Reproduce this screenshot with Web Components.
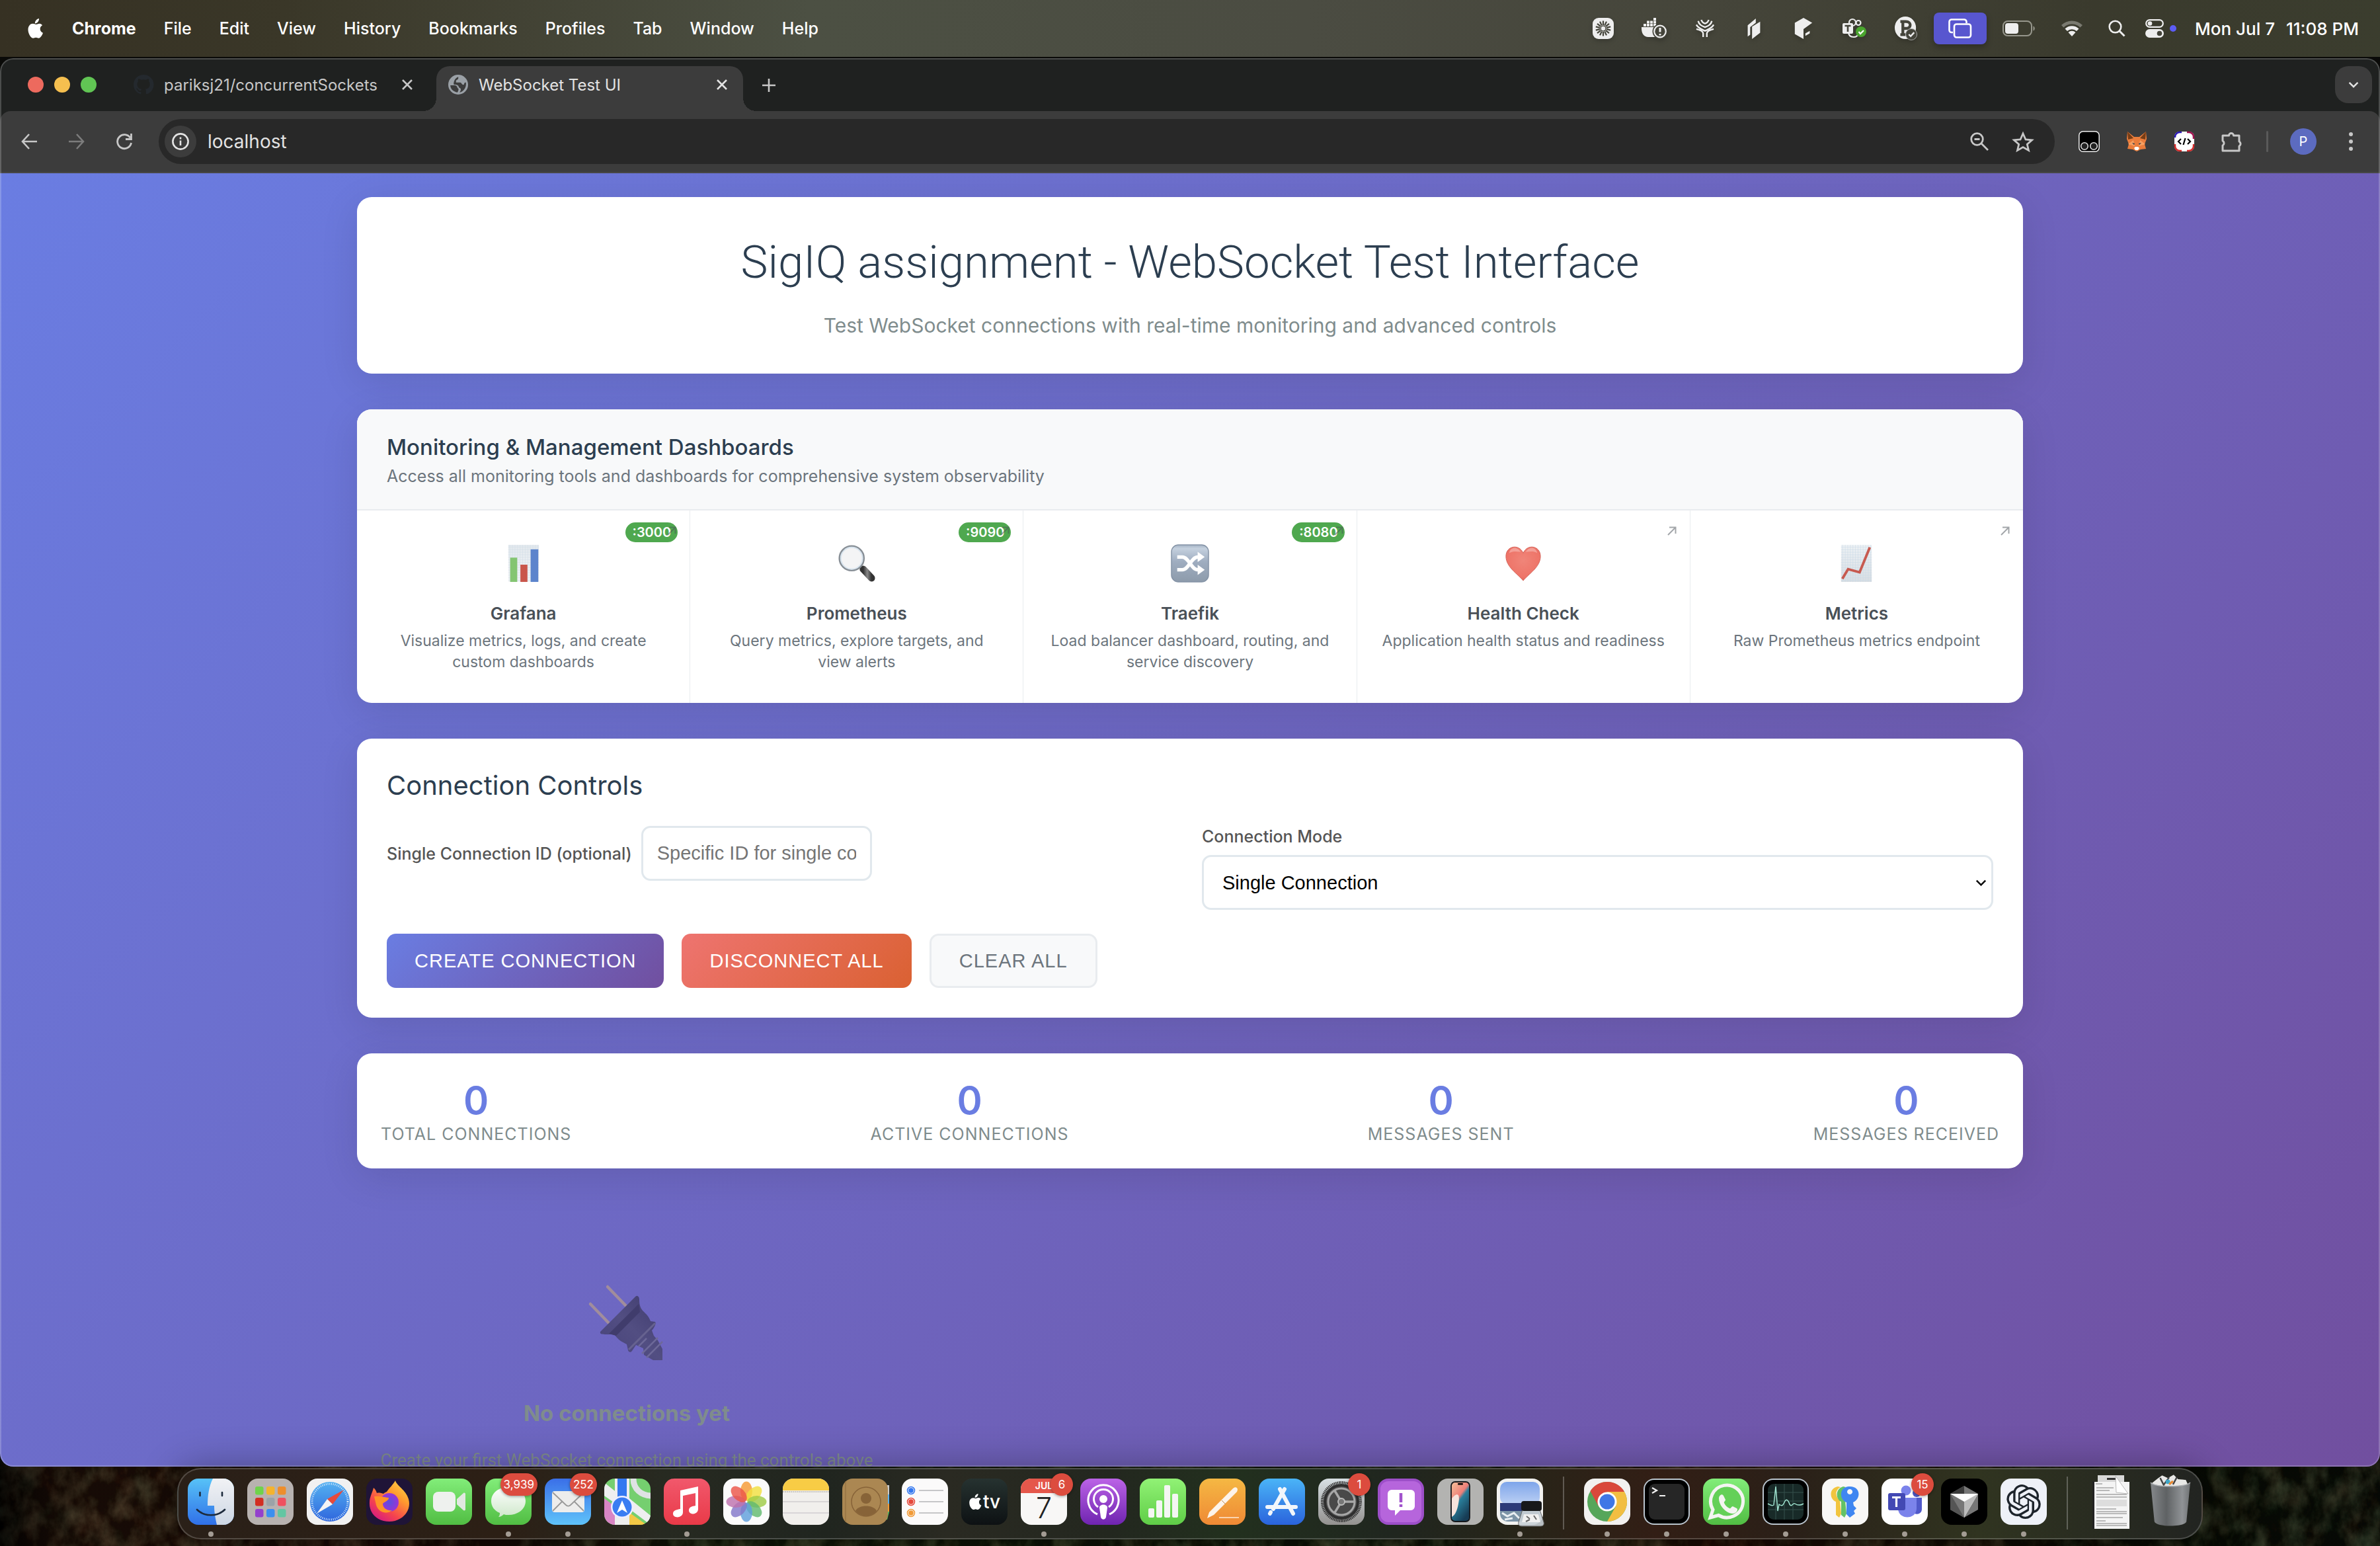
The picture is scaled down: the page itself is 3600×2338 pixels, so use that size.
<!DOCTYPE html>
<html lang="en">
<head>
<meta charset="utf-8">
<title>WebSocket Test UI</title>
<style>
html,body{margin:0;height:100%}
body{font-family:Inter,"Liberation Sans",sans-serif;overflow:hidden;background:#000}
</style>
</head>
<body>
<mac-desktop></mac-desktop>
<script>
/* ---------- icon library ---------- */
const petals=(n,r,f)=>Array.from({length:n},(_,i)=>f(i*360/n,i)).join('');
const ICONS={
apple:['0 0 26 32','<path fill="#fff" d="M18 1c.2 2-.6 3.900-1.800 5.300C15 7.700 13.400 8.500 11.900 8.400 11.700 6.500 12.600 4.700 13.700 3.400 14.900 2 16.700 1.100 18 1zM23 11.300c-2.500 1.500-3.300 3.400-3.300 5.500 0 2.700 1.500 4.900 4.300 6-1.100 3.400-3.900 8-6.500 8-1.600 0-2.300-1-4.200-1s-2.700 1-4.100 1C6 30.800 1.500 24.500 1.500 17.800c0-5.600 3.500-9 7.200-9 2 0 3.600 1.200 4.800 1.200 1.200 0 3-1.300 5.300-1.300 1.700 0 3.300.9 4.200 2.600z"/>'],
claude:['0 0 32 32','<rect width="32" height="32" rx="9" fill="#eee"/>'+petals(14,0,a=>`<path d="M16 11V4.500" stroke="#44443a" stroke-width="2.200" transform="rotate(${a} 16 16)"/>`)+'<circle cx="16" cy="16" r="4.600" fill="#44443a"/><circle cx="16" cy="16" r="3.200" fill="#eee"/>'],
docker:['0 0 38 32','<path fill="#eee" d="M0 14h19v10a8 8 0 0 0 2 5H10C4 29 0 24 0 16z"/><path fill="#eee" d="M3 9h4v4H3zM8 9h4v4H8zM13 9h4v4h-4zM8 4.500h4v4H8zM13 4.500h4v4h-4zM18 9h4v4h-4zM18 0h4v4h-4zM18 4.500h4v4h-4z"/><circle cx="28" cy="20.500" r="11.500" fill="#44443a"/><circle cx="28" cy="20.500" r="8.800" fill="none" stroke="#eee" stroke-width="2.200"/><path d="M28 15v6.500M28 24v2.500" stroke="#eee" stroke-width="3"/>'],
tree:['0 0 28 30','<g fill="none" stroke="#eee" stroke-width="2.600"><path d="M8 1c1 4 3 5 6 6 3-1 5-2 6-6M3 3c1 6 6 8 11 10 5-2 10-4 11-10M0 9c3 6 8 7 14 10 6-3 11-4 14-10M0 16c4 1 11 3 11 7v6M28 16c-4 1-11 3-11 7v6"/></g>'],
leaf:['0 0 20 34','<path fill="#eee" d="M0 12 13 1v7L4 15v12l-4 3zM20 6v18L7 34V14z"/>'],
cube:['0 0 28 34','<path fill="#eee" d="M14 0 28 8 14 18V34L0 26V8zM17 25l7-4v4l-7 4z"/>'],
teamsbar:['0 0 36 30','<g fill="none" stroke="#eee" stroke-width="2.200"><circle cx="15" cy="6" r="5"/><circle cx="24" cy="6.500" r="3.500"/><path d="M9 20c0 5 3 8 8 8 4 0 6-2 7-5"/></g><rect y="7" width="16" height="16" rx="2" fill="#eee"/><path d="M3.500 11h9M8 11v9" stroke="#44443a" stroke-width="2.600"/><circle cx="28" cy="20" r="8" fill="#4aa52e"/><path d="m24.500 20 2.500 3 5-5" fill="none" stroke="#fff" stroke-width="2.200"/>'],
pcheck:['0 0 36 38','<ellipse cx="17" cy="18" rx="17" ry="18" fill="#eee"/><path d="M9 8h9c9 0 9 11 0 11h-4M13 8v21M9 29h8" fill="none" stroke="#44443a" stroke-width="4.500"/><circle cx="26.500" cy="28.500" r="9" fill="#44443a" stroke="#aaa" stroke-width="1"/><path d="m22.500 28.500 3 3 5.500-6" fill="none" stroke="#eee" stroke-width="2.600"/>'],
windows:['0 0 36 30','<g fill="none" stroke="#fff" stroke-width="2.600"><path d="M7 21H5a3.500 3.500 0 0 1-3.500-3.500V5A3.500 3.500 0 0 1 5 1.500h19A3.500 3.500 0 0 1 27.500 5v2"/><rect x="9" y="8.500" width="25" height="20" rx="3.500"/></g>'],
battery:['0 0 50 24','<rect x="1" y="1" width="43" height="22" rx="7" fill="none" stroke="#96968c" stroke-width="2"/><rect x="4" y="4" width="20" height="16" rx="4" fill="#eee"/><path d="M46.500 8.500c3 1 3 6 0 7z" fill="#96968c"/>'],
wifi:['0 0 34 26','<path d="M1 8a23 23 0 0 1 32 0l-3.500 3.500a18 18 0 0 0-25 0z" fill="#7a7a70"/><path d="M6.500 13.500a15 15 0 0 1 21 0L24 17a10 10 0 0 0-14 0zM11.500 19a8 8 0 0 1 11 0L17 25z" fill="#eee"/>'],
searchm:['0 0 26 26','<circle cx="10.500" cy="10.500" r="8.800" fill="none" stroke="#eee" stroke-width="2.600"/><path d="m17 17 7.500 7.500" stroke="#eee" stroke-width="3"/>'],
control:['0 0 28 28','<rect x="1.200" y="1.200" width="25.600" height="10.600" rx="5.300" fill="none" stroke="#eee" stroke-width="2.200"/><circle cx="7" cy="6.500" r="3.300" fill="#eee"/><rect y="15" width="28" height="13" rx="6.500" fill="#eee"/><circle cx="21.500" cy="21.500" r="3.800" fill="#44443a"/>'],
github:['0 0 32 32','<path fill="#24292e" d="M16 0a16 16 0 0 0-5 31.200c.8.1 1.100-.3 1.100-.8v-3c-4.500 1-5.400-1.900-5.400-1.900-.7-1.800-1.800-2.300-1.800-2.300-1.400-1 .1-1 .1-1 1.600.1 2.500 1.700 2.500 1.700 1.400 2.500 3.800 1.700 4.700 1.300.1-1 .6-1.700 1-2.100-3.600-.4-7.300-1.800-7.300-7.900 0-1.700.6-3.200 1.600-4.300-.1-.4-.7-2 .2-4.200 0 0 1.300-.4 4.400 1.600a15 15 0 0 1 8 0c3-2 4.400-1.600 4.400-1.600.9 2.200.3 3.800.2 4.200 1 1.100 1.600 2.600 1.600 4.300 0 6.100-3.800 7.500-7.300 7.900.6.500 1.100 1.500 1.100 3v4.400c0 .4.300.9 1.100.8A16 16 0 0 0 16 0z"/>'],
globe:['0 0 28 28','<circle cx="14" cy="14" r="14" fill="#9aa0a6"/><path fill="#3c3c3c" d="M3 15h7c2 1 3 2 3 4 2 0 2 3 0 6-6-1-10-5-10-10zM14 3c1 3-1 4-3 5v3h6c2 0 2 4 5 3 1-1 0-3 3-3 1 8-4 13-9 14 3-4 2-6-1-7 0-3-3-4-5-4H8c-1-3 1-9 6-11z"/>'],
x:['0 0 20 20','<path d="m3 3 14 14M17 3 3 17" stroke="currentColor" stroke-width="2.600"/>'],
plus:['0 0 20 20','<path d="M10 0v20M0 10h20" stroke="currentColor" stroke-width="2.600"/>'],
chev:['0 0 20 12','<path d="m2 2 8 8 8-8" fill="none" stroke="currentColor" stroke-width="3"/>'],
go:['0 0 14 14','<path d="M1 13 12 2M3 1.500h9.500V11" fill="none" stroke="#495057" stroke-width="2"/>'],
back:['0 0 24 24','<path d="M24 12H2M12 1 2 12l10 11" fill="none" stroke="currentColor" stroke-width="2.600"/>'],
fwd:['0 0 24 24','<path d="M0 12h22M12 1l10 11-10 11" fill="none" stroke="currentColor" stroke-width="2.600"/>'],
reload:['0 0 24 24','<path d="M21 6.500A10.500 10.500 0 1 0 22.500 14M22.500 0v8.500H14" fill="none" stroke="currentColor" stroke-width="2.800"/>'],
info:['0 0 26 26','<circle cx="13" cy="13" r="11.600" fill="none" stroke="#e3e3e3" stroke-width="2.600"/><path d="M13 11.500V19M13 6.500v3" stroke="#e3e3e3" stroke-width="2.600"/>'],
zoomout:['0 0 28 28','<g fill="none" stroke="#c7c7c7"><circle cx="10.500" cy="10.500" r="8.800" stroke-width="2.800"/><path d="m17 17 10 10M6.500 10.500h8" stroke-width="2.800"/></g>'],
star:['0 0 32 30','<path d="m16 3 4 9 9.500.8-7.200 6.400 2.200 9.300L16 23.500l-8.500 5 2.200-9.300L2.500 12.800 12 12z" fill="none" stroke="#c7c7c7" stroke-width="2.800"/>'],
ext1:['0 0 32 32','<rect x=".8" y=".8" width="30.400" height="30.400" rx="6" fill="#000" stroke="#eee" stroke-width="1.500"/><circle cx="9" cy="23" r="5.300" fill="#222" stroke="#ddd" stroke-width="1.600"/><circle cx="23" cy="23" r="5.300" fill="#222" stroke="#ddd" stroke-width="1.600"/>'],
fox:['0 0 32 32','<path fill="#ea7d3c" d="M2 1 12 9h8L30 1l1 11-3 8 2 7-8 1-6 3-6-3-8-1 2-7-3-8z"/><path fill="#763d16" d="m2 1 9 10-8 2zM30 1l-9 10 8 2z"/><path fill="#f6a063" d="m3 20 8-6 2 9zM29 20l-8-6-2 9z"/><path fill="#fff" d="m12 26 2-2h4l2 2-2 3h-4z"/><path fill="#233447" d="m9 18 4 1-1 2zM23 18l-4 1 1 2z"/>'],
ext3:['0 0 32 32','<rect x="1" y="1" width="30" height="30" rx="8" fill="#fff"/><path d="M2 10V9a7 7 0 0 1 7-7h3" fill="none" stroke="#2b1ab5" stroke-width="2.500"/><path d="M20 2h3a7 7 0 0 1 7 7v3" fill="none" stroke="#a0104e" stroke-width="2.500"/><path d="M2 20v3a7 7 0 0 0 7 7h3M30 20v3a7 7 0 0 1-7 7h-3" fill="none" stroke="#d42a2a" stroke-width="2.500"/><path d="m11 12-4 4 4 4M21 12l4 4-4 4M17.500 11l-3 10" fill="none" stroke="#000" stroke-width="2.200"/>'],
puzzle:['0 0 32 32','<path d="M2 7h9.500a3.500 3.500 0 1 1 7 0H27v9a4 4 0 0 1 0 7v7H2v-8a4 4 0 0 0 0-7z" fill="none" stroke="#c7c7c7" stroke-width="3" stroke-linejoin="round"/>'],
more:['0 0 8 30','<g fill="#c7c7c7"><circle cx="4" cy="4" r="3"/><circle cx="4" cy="15" r="3"/><circle cx="4" cy="26" r="3"/></g>'],
/* emoji */
bars:['0 0 60 60','<defs><linearGradient id="g" x2="0" y2="1"><stop stop-color="#e3e9ee"/><stop offset="1" stop-color="#f3f5f7"/></linearGradient><pattern id="p" width="4" height="4" patternUnits="userSpaceOnUse"><path d="M0 0h4M0 0v4" stroke="#cfdbe6" stroke-width="1"/></pattern></defs><rect x="6" y="1" width="48" height="58" fill="url(#g)"/><rect x="6" y="1" width="48" height="58" fill="url(#p)"/><path fill="#84c572" d="M9 21h11v38H9z"/><path fill="#c9564b" d="M25 32h11v27H25z"/><path fill="#5c84cc" d="M41 8h12v51H41z"/>'],
lens:['0 0 60 60','<defs><linearGradient id="g" x2="1"><stop stop-color="#333"/><stop offset=".5" stop-color="#888"/><stop offset="1" stop-color="#333"/></linearGradient></defs><path d="m36 36 6 6" stroke="#999" stroke-width="4"/><path d="M40 39 53 53" stroke="url(#g)" stroke-width="11" stroke-linecap="round"/><circle cx="22" cy="22" r="19" fill="#f4f4f5" stroke="#888f96" stroke-width="3"/><circle cx="22" cy="22" r="17" fill="none" stroke="#d8e4ee" stroke-width="2"/>'],
shuffle:['0 0 60 60','<defs><linearGradient id="g" x2="0" y2="1"><stop stop-color="#a4b2c3"/><stop offset=".1" stop-color="#c4d0de"/><stop offset=".45" stop-color="#9fadc0"/><stop offset="1" stop-color="#8d9bab"/></linearGradient></defs><rect x="1" y="1" width="58" height="58" rx="11" fill="url(#g)" stroke="#8493a6" stroke-width="1.500"/><path d="M10 20h8c10 0 14 20 24 20h5M10 40h8c10 0 14-20 24-20h5" fill="none" stroke="#fff" stroke-width="5.500"/><path fill="#fff" d="m42 12 11 8-11 8zM42 32l11 8-11 8z"/>'],
heart:['0 0 60 60','<defs><radialGradient id="g" cx=".5" cy=".4" r=".7"><stop stop-color="#f08579"/><stop offset=".7" stop-color="#ee7468"/><stop offset="1" stop-color="#d65c50"/></radialGradient></defs><path fill="url(#g)" stroke="#d4665b" d="M30 57C22 47 3 36 3 19 3 2 24-1 30 14 36-1 57 2 57 19c0 17-19 28-27 38z"/><path fill="#fff" opacity=".3" d="M8 14C10 3 22 4 26 12 20 12 14 10 8 14zM34 12c4-8 16-9 18 2-6-4-12-2-18-2z"/>'],
chart:['0 0 60 60','<defs><pattern id="p" width="4" height="4" patternUnits="userSpaceOnUse"><path d="M0 0h4M0 0v4" stroke="#c6d8e6"/></pattern><linearGradient id="g" x2="0" y2="1"><stop stop-color="#eef2f5"/><stop offset="1" stop-color="#d9dee3"/></linearGradient></defs><rect x="6" y="1" width="48" height="58" fill="url(#g)"/><rect x="6" y="1" width="48" height="58" fill="url(#p)"/><path d="M8 54 17 39l18 5L51 5" fill="none" stroke="#c75a50" stroke-width="4"/>'],
plug:['0 0 114 114','<defs><linearGradient id="g" x1="0" y1="1" x2="1" y2="0"><stop stop-color="#47427a"/><stop offset=".5" stop-color="#524e82"/><stop offset="1" stop-color="#3f3b6d"/></linearGradient></defs><path d="M28 2 56 31M2 28 30 57" stroke="#a18d9c" stroke-width="4.500" stroke-linecap="round"/><path fill="url(#g)" d="M17 70 70 17c3-3 6 0 6 4 0 7 1 12 5 17 6 6 9 8 12 16l7 1c2 3-2 10-5 13l3 8 6 7 7 13v17h-14L83 105l-1-10-11-5-6 9c-2 3-5 2-6-1l-2-9c-8-4-13-7-18-14-4-2-8-1-13-1-6 0-10 0-9-4z"/><path fill="#403c6c" d="M30 73 75 28l2 12-36 36z"/><path d="M60 97 100 57" stroke="#66628f" stroke-width="3"/><path d="m80 103 24-24M87 109l24-24M75 92l12-12" stroke="#6d6999" stroke-width="2.500"/>'],
/* dock */
finder:['0 0 70 70','<defs><linearGradient id="g" x2="0" y2="1"><stop stop-color="#57c2f7"/><stop offset="1" stop-color="#3070e8"/></linearGradient><linearGradient id="h" x2="0" y2="1"><stop stop-color="#f1f2f5"/><stop offset="1" stop-color="#cdd7e4"/></linearGradient></defs><rect width="70" height="70" rx="16" fill="url(#g)"/><path fill="url(#h)" d="M38 0h16a16 16 0 0 1 16 16v38a16 16 0 0 1-16 16H44c-2-9-4-18-4-29H30C30 26 32 12 38 0z"/><path d="M18.500 21v5M52 21v5M14 47c11 11 31 11 42 0" fill="none" stroke="#1d2b3c" stroke-width="2.600" stroke-linecap="round"/>'],
launch:['0 0 70 70','<rect width="70" height="70" rx="16" fill="#b8b2b0"/>'+['#6fd34b','#f4b32e','#ee8e2c','#d22e22','#9ba3a8','#f0505f','#9440cc','#3b8ff0','#63c6a2'].map((c,i)=>`<rect x="${12+i%3*17}" y="${12+Math.floor(i/3)*17}" width="12.500" height="12.500" rx="3" fill="${c}"/>`).join('')],
safari:['0 0 70 70','<defs><linearGradient id="g" x2="0" y2="1"><stop stop-color="#54b1f1"/><stop offset="1" stop-color="#2f66dd"/></linearGradient></defs><rect width="70" height="70" rx="16" fill="#f1f1f1"/><circle cx="35" cy="35" r="30" fill="url(#g)"/><circle cx="35" cy="35" r="27" fill="none" stroke="#d6e8fa" stroke-width="3" stroke-dasharray="1 1.800"/><path fill="#e8493b" d="m56 17-25 14 8 8z"/><path fill="#f4f4f4" d="M15 53 39 39l-8-8z"/>'],
firefox:['0 0 70 70','<defs><linearGradient id="g" x1="1" y1="0" x2=".3" y2="1"><stop stop-color="#ffe14a"/><stop offset=".4" stop-color="#ff9a2e"/><stop offset=".75" stop-color="#f5444e"/><stop offset="1" stop-color="#d81e7c"/></linearGradient><radialGradient id="h"><stop stop-color="#5a4fe0"/><stop offset="1" stop-color="#9a34d4"/></radialGradient></defs><rect width="70" height="70" rx="16" fill="#1f1437"/><path fill="url(#g)" d="M44 3c2 8 16 14 20 28 5 18-10 34-29 34C17 65 4 53 5 36c0-8 4-14 6-22 3 2 4 5 5 8 3-1 7 0 10 1 2-2 3-2 5-3 4-6 9-10 13-17z"/><circle cx="35" cy="36" r="14" fill="url(#h)"/><path fill="#ff9327" d="M12 27c8-1 13 1 22 2 0 5-7 6-9 9 0 7 7 11 14 10-8 7-21 3-24-8z"/>'],
facetime:['0 0 70 70','<defs><linearGradient id="g" x2="0" y2="1"><stop stop-color="#82ed79"/><stop offset="1" stop-color="#51bd43"/></linearGradient></defs><rect width="70" height="70" rx="16" fill="url(#g)"/><rect x="11" y="20" width="34" height="30" rx="8" fill="#eef1ee"/><path fill="#e2e8e2" d="M47 31 57 22c1-1 3 0 3 1v24c0 1-2 2-3 1l-10-9z"/>'],
messages:['0 0 70 70','<defs><linearGradient id="g" x2="0" y2="1"><stop stop-color="#82ed79"/><stop offset="1" stop-color="#51bd43"/></linearGradient><linearGradient id="h" x2="0" y2="1"><stop stop-color="#fff"/><stop offset="1" stop-color="#cfe8cb"/></linearGradient></defs><rect width="70" height="70" rx="16" fill="url(#g)"/><path fill="url(#h)" d="M35 13c15 0 26 9 26 21S50 55 35 55c-3 0-5 0-7-1-2 2-5 4-8 4 2-2 2-4 2-6C14 49 9 42 9 34c0-12 11-21 26-21z"/>'],
mail:['0 0 70 70','<defs><linearGradient id="g" x2="0" y2="1"><stop stop-color="#3a6fe8"/><stop offset="1" stop-color="#5fc3fa"/></linearGradient></defs><rect width="70" height="70" rx="16" fill="url(#g)"/><rect x="11" y="19" width="49" height="32" rx="4" fill="#ededec"/><path d="m12 21 20 19c2 2 5 2 7 0l20-19M12 49l15-15M59 49 44 34" fill="none" stroke="#999" stroke-width="1.800"/>'],
maps:['0 0 70 70','<defs><clipPath id="c"><rect width="70" height="70" rx="16"/></clipPath></defs><g clip-path="url(#c)"><path fill="#75cf6f" d="M0 0h70v70H0z"/><path fill="#d885c4" d="M0 30 24 48v22H0z"/><path fill="#f3c846" d="M36 70V50l28 20z"/><path fill="#eeeef0" d="M0 6 20 22v18L0 26zM38 30 70 56v14L38 46z"/><path fill="#eee" d="M16 0h22v70H16z"/><path fill="#3478f0" d="M20 0h14v40H20z"/><path d="M44 0c0 16 12 26 28 26" fill="none" stroke="#dfe2e4" stroke-width="9"/></g><circle cx="27" cy="43" r="17" fill="#eef"/><circle cx="27" cy="43" r="14.500" fill="#3a7df2"/><path fill="#fff" d="m27 33 8 19-8-5-8 5z"/>'],
music:['0 0 70 70','<defs><linearGradient id="g" x2="0" y2="1"><stop stop-color="#f1586c"/><stop offset="1" stop-color="#e93a48"/></linearGradient></defs><rect width="70" height="70" rx="16" fill="url(#g)"/><path fill="#fff" d="M25 18 52 12v34c0 9-14 10-14 2 0-5 5-6 10-7V22l-19 4v25c0 9-15 10-15 2 0-5 6-6 11-7z"/>'],
photos:['0 0 70 70','<rect width="70" height="70" rx="16" fill="#fbfbfb"/>'+petals(8,0,(a,i)=>`<ellipse cx="35" cy="19" rx="9" ry="14.500" opacity=".82" fill="${['#f59a33','#f0df3f','#9fcb47','#62b96f','#5f9fdc','#8277c9','#bd71ad','#ec5648'][i]}" transform="rotate(${a} 35 35)"/>`)],
notes:['0 0 70 70','<rect width="70" height="70" rx="16" fill="#f1efec"/><path fill="#f8cc45" d="M0 18v-2A16 16 0 0 1 16 0h38a16 16 0 0 1 16 16v2z"/><path d="M0 20h70" stroke="#b9b5ac" stroke-width="2" stroke-dasharray="1.500 1.500"/><path d="M0 35h70M0 52h70" stroke="#cfcdd0" stroke-width="1.500"/>'],
contacts:['0 0 72 70','<path fill="#ccc" d="M64 10h7v14h-7z"/><path fill="#5ab1ef" d="M64 24h7v14h-7z"/><path fill="#f19a37" d="M64 38h7v12h-7z"/><path fill="#5fc965" d="M64 50h7l-3 12h-4z"/><rect width="69" height="70" rx="16" fill="#ab8752"/><path d="M5 4v62" stroke="#8c6b3c"/><circle cx="36" cy="35" r="22" fill="none" stroke="#876338" stroke-width="1.500"/><circle cx="36" cy="30" r="8" fill="#876338"/><path fill="#876338" d="M20 49c4-10 28-10 32 0-8 10-24 10-32 0z"/>'],
reminders:['0 0 70 70','<rect width="70" height="70" rx="16" fill="#fbfafa"/><g fill="none" stroke-width="1.500"><circle cx="14" cy="18" r="5.500" stroke="#3478f0"/><circle cx="14" cy="35" r="5.500" stroke="#e5483b"/><circle cx="14" cy="52" r="5.500" stroke="#f19a37"/><path d="M26 18h37M26 35h37M26 52h37" stroke="#b5b5b8"/></g><circle cx="14" cy="18" r="3.800" fill="#3478f0"/><circle cx="14" cy="35" r="3.800" fill="#e5483b"/><circle cx="14" cy="52" r="3.800" fill="#f19a37"/>'],
podcasts:['0 0 70 70','<defs><linearGradient id="g" x2="0" y2="1"><stop stop-color="#bb63e6"/><stop offset="1" stop-color="#6f24b0"/></linearGradient></defs><rect width="70" height="70" rx="16" fill="url(#g)"/><g fill="none" stroke="#fff" stroke-width="3"><path d="M26 54a23 23 0 1 1 18 0"/><path d="M27 43a14.500 14.500 0 1 1 16 0"/></g><circle cx="35" cy="31" r="6" fill="#fff"/><path fill="#fff" d="M29 44c0-6 12-6 12 0l-2 14c-1 5-7 5-8 0z"/>'],
numbers:['0 0 70 70','<defs><linearGradient id="g" x2="0" y2="1"><stop stop-color="#91f275"/><stop offset="1" stop-color="#5fcd47"/></linearGradient></defs><rect width="70" height="70" rx="16" fill="url(#g)"/><g fill="#f4f6f3"><rect x="13" y="45" width="9" height="14" rx="2"/><rect x="25" y="33" width="9" height="26" rx="2"/><rect x="37" y="10" width="9" height="49" rx="2"/><rect x="49" y="23" width="9" height="36" rx="2"/></g>'],
pages:['0 0 70 70','<defs><linearGradient id="g" x2="0" y2="1"><stop stop-color="#f5b843"/><stop offset="1" stop-color="#ef8935"/></linearGradient></defs><rect width="70" height="70" rx="16" fill="url(#g)"/><path fill="#fdf4ea" d="m12 60 3-9L51 15c4-4 9-1 6 5L22 55z"/><path d="M30 59h30" stroke="#fbd3ae" stroke-width="2"/><path d="m34 33 6 6" stroke="#b98a55"/>'],
appstore:['0 0 70 70','<defs><linearGradient id="g" x2="0" y2="1"><stop stop-color="#4ab4f7"/><stop offset="1" stop-color="#2a63dc"/></linearGradient></defs><rect width="70" height="70" rx="16" fill="url(#g)"/><path d="M32 16 52 53M39 16 22 46M18 51l-1 2M13 43h43" stroke="#f2f6fb" stroke-width="6" stroke-linecap="round"/>'],
settings:['0 0 70 70','<defs><linearGradient id="g" x2="0" y2="1"><stop stop-color="#d8e0e4"/><stop offset="1" stop-color="#93918f"/></linearGradient></defs><rect width="70" height="70" rx="16" fill="url(#g)"/><circle cx="35" cy="35" r="29" fill="none" stroke="#333" stroke-width="4" stroke-dasharray="1.500 1"/><circle cx="35" cy="35" r="25" fill="#555" stroke="#2e2e2e" stroke-width="4"/><circle cx="35" cy="35" r="20" fill="#494949" stroke="#a7a7a7" stroke-width="3"/><path d="M35 35h21M35 35 24 17M35 35 24 53" stroke="#a7a7a7" stroke-width="3.500"/><circle cx="35" cy="35" r="5" fill="#777" stroke="#bbb" stroke-width="2"/>'],
feedback:['0 0 70 70','<rect width="70" height="70" rx="16" fill="#9d4fc9"/><rect x="4" y="4" width="62" height="62" rx="12" fill="#b665dc"/><path fill="#fff" d="M21 17h29a6 6 0 0 1 6 6v19a6 6 0 0 1-6 6H34l-8 8v-8h-5a6 6 0 0 1-6-6V23a6 6 0 0 1 6-6z"/><path d="M35 22v14M35 39v4" stroke="#a152cd" stroke-width="4.500"/>'],
iphone:['0 0 70 70','<defs><linearGradient id="g" x2=".6" y2="1"><stop stop-color="#f3c39b"/><stop offset=".45" stop-color="#ee7f78"/><stop offset=".55" stop-color="#2a7f9b"/><stop offset="1" stop-color="#173c55"/></linearGradient></defs><rect width="70" height="70" rx="16" fill="#b3b3b1"/><rect x="21" y="5" width="28" height="60" rx="6" fill="url(#g)" stroke="#15181c" stroke-width="1.800"/><path fill="#f6e3dc" d="M22 30c8-10 13-8 10 8-2 12-6 18-10 20z"/><rect x="31" y="7" width="8" height="2.500" rx="1" fill="#000"/>'],
preview:['0 0 74 74','<defs><linearGradient id="g" x2="0" y2="1"><stop stop-color="#7ea5ea"/><stop offset="1" stop-color="#bcd0f4"/></linearGradient></defs><rect width="70" height="70" rx="16" fill="#f2f2f0"/><rect x="5" y="5" width="60" height="34" rx="10" fill="url(#g)"/><path fill="#2c3a78" d="M5 37h60v12H5z"/><path fill="#7b93a6" d="M5 49h60v16H17a12 12 0 0 1-12-12z"/><path d="M8 52l8 5 10-5 8 8M12 62l12-2" stroke="#e8eef2" stroke-width="3" fill="none"/><path fill="#c9d0d6" fill-opacity=".9" stroke="#666" d="M39 47h26l6 19c1 4-1 6-5 6H38c-4 0-6-2-5-6z"/><path fill="#f0f0f0" d="M41 54h22l3 12H38z"/><path d="M45 57l5 4M56 56l4 6M44 65l6-3" stroke="#666" stroke-width="2"/><rect x="37" y="34" width="31" height="15" rx="4" fill="#17181a"/>'],
chrome:['0 0 70 70','<rect width="70" height="70" rx="16" fill="#f2f1f0"/><circle cx="35" cy="35" r="30" fill="#56a65a"/><path fill="#d9483b" d="M35 20h26A30 30 0 0 0 9.500 19L22 42z"/><path fill="#f2be42" d="M35 20h26a30 30 0 0 1-26 45l13-23z"/><circle cx="35" cy="35" r="14.500" fill="#fff"/><circle cx="35" cy="35" r="11.500" fill="#3f77e6"/>'],
terminal:['0 0 70 70','<rect width="70" height="70" rx="16" fill="#b9c4cd"/><rect x="2" y="2" width="66" height="66" rx="14" fill="#000"/><rect x="8" y="8" width="54" height="54" rx="9" fill="#262626"/><path d="m13 14 7 4-7 4M24 26h9" fill="none" stroke="#f2f2f2" stroke-width="2.200"/>'],
whatsapp:['0 0 70 70','<defs><linearGradient id="g" x2="0" y2="1"><stop stop-color="#82ed79"/><stop offset="1" stop-color="#51bd43"/></linearGradient></defs><rect width="70" height="70" rx="16" fill="url(#g)"/><path fill="#64d058" stroke="#f4f4f2" stroke-width="5" d="M11 59 15 47a24.500 24.500 0 1 1 8.500 8.500z"/><path fill="#f4f4f2" d="M24 30c0-5 5-8 7-4l3 6c0 2-3 3-2 5 2 4 4 6 8 8 2 1 3-3 5-3l6 3c3 2-1 8-6 8-10 0-21-12-21-23z"/>'],
activity:['0 0 70 70','<rect width="70" height="70" rx="16" fill="#b9c4cd"/><rect x="2" y="2" width="66" height="66" rx="14" fill="#000"/><rect x="8" y="8" width="54" height="54" rx="9" fill="#182a28"/><path d="M20 8v54M33 8v54M46 8v54M8 21h54M8 34h54M8 47h54" stroke="#35514c"/><path d="M8 38c4 2 6 4 9 2l3-28 3 37 2-10c4 3 6 2 8-3 3-7 6-3 8 3 3 5 5-3 8-1s8 3 13 0" fill="none" stroke="#9fe3cf" stroke-width="1.500"/>'],
keys:['0 0 70 70','<rect width="70" height="70" rx="16" fill="#f8f7f6"/><path fill="#f2c53f" d="M24 12c-15 3-12 20-3 23v20l5 4 3-6-2-20c-7-6-8-15 1-20z"/><path fill="#63c267" d="M32 12c-13 4-11 20-3 23v20l5 4 3-6-2-20c-6-6-7-15 1-20z"/><path fill="#3f86f1" fill-rule="evenodd" d="M42 12c17 0 17 19 5 24l1 5 4 4-4 4 2 4-8 6-5-5V36C25 31 26 12 42 12zm0 4a4 4 0 1 0 .1 0z"/>'],
teams:['0 0 70 70','<rect width="70" height="70" rx="16" fill="#fff"/><circle cx="53" cy="22" r="6" fill="#5059c9"/><circle cx="37" cy="18" r="7.500" fill="#7b83eb"/><path fill="#5059c9" d="M44 29h17v17c0 8-9 10-14 5z"/><path fill="#7b83eb" d="M25 29h28v16c0 18-28 18-28 0z"/><rect x="10" y="22" width="26" height="26" rx="3" fill="#4349b4"/><path d="M16 28.500h13M22.500 28.500V43" stroke="#fff" stroke-width="3.200"/>'],
cursor:['0 0 70 70','<rect width="70" height="70" rx="16" fill="#000"/><path fill="#777" d="m35 11 21 12v24L35 59 14 47V23z"/><path fill="#3c3c3c" d="M35 11 14 23l21 12z"/><path fill="#555" d="M14 23 35 59 14 47z"/><path fill="#fff" d="M14 23h42L35 59V35z"/><path fill="#bbb" d="M56 23 35 59V35z"/>'],
openai:['0 0 70 70','<rect width="70" height="70" rx="16" fill="#eef1f8"/><path fill="#1d242c" transform="translate(9 9) scale(2.170)" d="M22.2819 9.8211a5.9847 5.9847 0 0 0-.5157-4.9108 6.0462 6.0462 0 0 0-6.5098-2.9A6.0651 6.0651 0 0 0 4.9807 4.1818a5.9847 5.9847 0 0 0-3.9977 2.9 6.0462 6.0462 0 0 0 .7427 7.0966 5.98 5.98 0 0 0 .511 4.9107 6.051 6.051 0 0 0 6.5146 2.9001A5.9847 5.9847 0 0 0 13.2599 24a6.0557 6.0557 0 0 0 5.7718-4.2058 5.9894 5.9894 0 0 0 3.9977-2.9001 6.0557 6.0557 0 0 0-.7475-7.0729zm-9.022 12.6081a4.4755 4.4755 0 0 1-2.8764-1.0408l.1419-.0804 4.7783-2.7582a.7948.7948 0 0 0 .3927-.6813v-6.7369l2.02 1.1686a.071.071 0 0 1 .038.052v5.5826a4.504 4.504 0 0 1-4.4945 4.4944zm-9.6607-4.1254a4.4708 4.4708 0 0 1-.5346-3.0137l.142.0852 4.783 2.7582a.7712.7712 0 0 0 .7806 0l5.8428-3.3685v2.3324a.0804.0804 0 0 1-.0332.0615L9.74 19.9502a4.4992 4.4992 0 0 1-6.1408-1.6464zM2.3408 7.8956a4.485 4.485 0 0 1 2.3655-1.9728V11.6a.7664.7664 0 0 0 .3879.6765l5.8144 3.3543-2.0201 1.1685a.0757.0757 0 0 1-.071 0l-4.8303-2.7865A4.504 4.504 0 0 1 2.3408 7.872zm16.5963 3.8558L13.1038 8.364 15.1192 7.2a.0757.0757 0 0 1 .071 0l4.8303 2.7913a4.4944 4.4944 0 0 1-.6765 8.1042v-5.6772a.79.79 0 0 0-.407-.667zm2.0107-3.0231l-.142-.0852-4.7735-2.7818a.7759.7759 0 0 0-.7854 0L9.409 9.2297V6.8974a.0662.0662 0 0 1 .0284-.0615l4.8303-2.7866a4.4992 4.4992 0 0 1 6.6802 4.66zM8.3065 12.863l-2.02-1.1638a.0804.0804 0 0 1-.038-.0567V6.0742a4.4992 4.4992 0 0 1 7.3757-3.4537l-.142.0805L8.704 5.459a.7948.7948 0 0 0-.3927.6813zm1.0976-2.3654l2.602-1.4998 2.6069 1.4998v2.9994l-2.5974 1.4997-2.6067-1.4997Z"/>'],
docs:['0 0 56 82','<path fill="#d8d8d8" d="M8 1h40v26H8z"/><path fill="#f4f4f4" d="M2 11h54v71H2z"/><path fill="#222" d="M0 10h3v72H0z"/><path d="M22 5h14v3H22z" fill="#333"/><path d="M5 14h10M6 20h26M6 24h20M6 30h46M6 34h46M6 52h30M6 56h46M6 59h46M6 65h40M6 70h14M6 74h46M6 77h46" stroke="#a5a5a5" stroke-width="1.500"/><path fill="#ddd" d="M6 38h46v10H6z"/><path fill="#fff" stroke="#bbb" d="M35 2 54 29 36 27z"/>'],
trash:['0 0 64 80','<defs><linearGradient id="g" x2="1"><stop stop-color="#85888b"/><stop offset=".4" stop-color="#5f6264"/><stop offset=".8" stop-color="#909396"/><stop offset="1" stop-color="#6f7274"/></linearGradient></defs><path fill="#e8e8e6" d="m3 12 9-7 7-5 9 4 9-5 7 7 12 1 4 9-14 8H12z"/><path d="m16 4 6 12M22 14l8-11M36 14 42 3" stroke="#444" stroke-width="2.500"/><circle cx="28" cy="10" r="3.500" fill="#3fa7c8"/><path d="m30 14 6-5" stroke="#e88a33" stroke-width="3.500"/><path fill="url(#g)" d="M1 11c8 8 54 8 62 0l-6 61c-2 9-48 9-50 0z"/><path fill="none" stroke="#aaadb0" stroke-width="1.500" d="M1 11c8 8 54 8 62 0"/>']
};
const define=(name,html)=>{
  const t=document.createElement('template');
  customElements.define(name,class extends HTMLElement{
    connectedCallback(){
      if(this.shadowRoot)return;
      t.innerHTML=typeof html==='function'?html(this):html;
      this.attachShadow({mode:'open'}).append(t.content.cloneNode(true));
    }
  });
};
const A=(e,n,d='')=>e.getAttribute(n)||d;

define('ui-icon',e=>{
  const [vb,body]=ICONS[A(e,'name')];
  return `<style>:host{display:block;flex:none;width:${A(e,'w')}px;height:${A(e,'h')}px}svg{display:block;width:100%;height:100%;overflow:visible}</style><svg viewBox="${vb}" aria-hidden="true">${body}</svg>`;
});

/* ---------- menu bar ---------- */
define('mac-menubar',`<style>
:host{display:flex;justify-content:space-between;align-items:center;height:86px;box-sizing:border-box;padding:0 32px 0 41px;color:#fff;font-size:25px;font-weight:500;
background:linear-gradient(90deg,#363123,#3a3728 12%,#4c5043 34%,#4b4c42 55%,#45453a 72%,#3a3a2d 88%,#3b3d2e)}
nav,.tray,.sys{display:flex;align-items:center}
nav{gap:42px;white-space:nowrap}b{font-weight:700}
.tray{gap:42px}.sys{gap:38px}
.pill{display:flex;width:80px;height:48px;border-radius:8px;background:#5856cf;align-items:center;justify-content:center;box-shadow:0 4px 10px #0004;margin-left:-18px}
.sys>:nth-child(1){margin-left:-18px}
.cc{display:flex;align-items:center;gap:9px;margin-left:-8px}
.dot{width:10px;height:10px;border-radius:50%;background:#5c5cf5}
time{display:flex;gap:17px;white-space:nowrap}
.sys time{margin-left:-10px;font-size:26px}
.tray>ui-icon{filter:drop-shadow(0 3px 3px #0003)}
</style>
<nav><ui-icon name="apple" w="26" h="32"></ui-icon><b>Chrome</b><span>File</span><span>Edit</span><span>View</span><span>History</span><span>Bookmarks</span><span>Profiles</span><span>Tab</span><span>Window</span><span>Help</span></nav>
<div class="tray">
<ui-icon name="claude" w="32" h="32"></ui-icon><ui-icon name="docker" w="38" h="32"></ui-icon><ui-icon name="tree" w="32" h="28"></ui-icon><ui-icon name="leaf" w="32" h="32"></ui-icon><ui-icon name="cube" w="34" h="32"></ui-icon><ui-icon name="teamsbar" w="36" h="30"></ui-icon><ui-icon name="pcheck" w="36" h="36"></ui-icon>
<span class="pill"><ui-icon name="windows" w="36" h="30"></ui-icon></span>
<div class="sys"><ui-icon name="battery" w="50" h="24"></ui-icon><ui-icon name="wifi" w="34" h="26"></ui-icon><ui-icon name="searchm" w="26" h="26"></ui-icon><div class="cc"><ui-icon name="control" w="28" h="28"></ui-icon><span class="dot"></span></div><time><span>Mon Jul 7</span><span>11:08 PM</span></time></div>
</div>`);

/* ---------- browser ---------- */
define('browser-tab',e=>`<style>
:host{display:flex;align-items:center;box-sizing:border-box;width:464px;height:68px;padding:0 22px 12px 18px;gap:16px;font-size:24px;color:#c7c7c7;position:relative;white-space:nowrap}
:host([active]){background:#3c3c3c;border-radius:20px 20px 0 0;color:#e3e3e3;margin-left:12px}
:host([active])::before,:host([active])::after{content:"";position:absolute;bottom:0;width:20px;height:20px}
:host([active])::before{left:-20px;background:radial-gradient(circle at 0 0,transparent 20px,#3c3c3c 20px)}
:host([active])::after{right:-20px;background:radial-gradient(circle at 100% 0,transparent 20px,#3c3c3c 20px)}
span{flex:1}button{all:unset;display:flex}
</style><ui-icon name="${A(e,'icon')}" w="30" h="30"></ui-icon><span><slot></slot></span><button aria-label="Close tab"><ui-icon name="x" w="20" h="20"></ui-icon></button>`);

define('browser-window',`<style>
:host{display:flex;flex-direction:column;min-height:0;box-sizing:border-box;border-radius:20px;overflow:hidden;position:relative;background:#1f2120}
:host::after{content:"";position:absolute;inset:0;border:2px solid #ffffff33;border-radius:20px;pointer-events:none}
button{all:unset;display:flex;align-items:center;justify-content:center}
.strip{display:flex;align-items:flex-end;height:80px;padding:0 12px 0 42px}
.lights{display:flex;gap:16px;align-self:center;margin-right:38px}
.lights i{width:24px;height:24px;border-radius:50%}
.plus{height:58px;color:#c7c7c7;margin:0 auto 10px 29px}
.drop{width:56px;height:56px;border-radius:20px;background:#3c3c3c;color:#e3e3e3;margin-bottom:12px}
.bar{display:flex;align-items:center;height:94px;box-sizing:border-box;padding:0 40px 0 32px;background:#3c3c3c;border-bottom:2px solid #474747;border-radius:16px 16px 0 0;color:#c7c7c7}
.nav{display:flex;gap:48px;margin-right:40px}.off{color:#7c7c7c}
.omni{flex:1;display:flex;align-items:center;height:68px;border-radius:34px;background:#282828;box-sizing:border-box;padding:0 32px 0 9px;gap:17px}
.omni .i{width:48px;height:48px;border-radius:50%;background:#3c3c3c}
input{all:unset;flex:1;font:28px Inter,sans-serif;color:#e3e3e3}
.acts{display:flex;gap:36px}
.ext{display:flex;align-items:center;gap:40px;margin-left:36px}
.sep{width:3px;height:32px;background:#5a5a5a;margin-left:-4px;border-radius:2px}
.me{width:40px;height:40px;border-radius:50%;background:#5c6bc0;color:#fff;font-size:20px;margin:0 8px 0 -7px}
.view{flex:1;min-height:0;overflow:hidden;display:flex;flex-direction:column}
</style>
<div class="strip"><div class="lights"><i style="background:#ed6a5e"></i><i style="background:#f5bf4f"></i><i style="background:#61c554"></i></div>
<browser-tab icon="github">pariksj21/concurrentSockets</browser-tab><browser-tab icon="globe" active>WebSocket Test UI</browser-tab>
<button class="plus" aria-label="New tab"><ui-icon name="plus" w="20" h="20"></ui-icon></button>
<button class="drop" aria-label="Search tabs"><ui-icon name="chev" w="16" h="10"></ui-icon></button></div>
<div class="bar"><div class="nav"><button aria-label="Back"><ui-icon name="back" w="24" h="24"></ui-icon></button><button class="off" aria-label="Forward"><ui-icon name="fwd" w="24" h="24"></ui-icon></button><button aria-label="Reload"><ui-icon name="reload" w="24" h="24"></ui-icon></button></div>
<div class="omni"><button class="i" aria-label="Site information"><ui-icon name="info" w="26" h="26"></ui-icon></button><input aria-label="Address" value="localhost"><div class="acts"><button aria-label="Zoom"><ui-icon name="zoomout" w="28" h="28"></ui-icon></button><button aria-label="Bookmark"><ui-icon name="star" w="32" h="30"></ui-icon></button></div></div>
<div class="ext"><ui-icon name="ext1" w="32" h="32"></ui-icon><ui-icon name="fox" w="32" h="32"></ui-icon><ui-icon name="ext3" w="32" h="32"></ui-icon><ui-icon name="puzzle" w="32" h="32"></ui-icon><span class="sep"></span><button class="me" aria-label="Profile">P</button><button aria-label="Menu"><ui-icon name="more" w="8" h="30"></ui-icon></button></div></div>
<div class="view"><slot></slot></div>`);

/* ---------- page ---------- */
define('app-card',`<style>:host{display:block;background:#fff;border-radius:22px;box-shadow:0 14px 58px #0000001a;overflow:hidden}</style><slot></slot>`);

define('dash-link',e=>`<style>
:host{display:block;flex:1;border-right:1px solid #e9ecef}
:host(:last-child){border-right:0}
a{display:flex;flex-direction:column;align-items:center;position:relative;box-sizing:border-box;height:100%;padding:45px 36px 46px;text-align:center;text-decoration:none;color:#495057}
.ic{height:58px;margin:6px 0 30px;display:flex}
b{font-size:26px;line-height:34px;font-weight:600;margin-bottom:8px}
p{margin:0;font-size:23px;line-height:32px;color:#6c757d}
.port{position:absolute;top:18px;right:18px;background:#4fa84f;color:#fff;font-size:20px;line-height:30px;font-weight:600;border-radius:15px;padding:0 10px 0 11px}
.go{position:absolute;top:24px;right:20px;opacity:.5}
</style><a href="#">${A(e,'port')?`<span class="port">${A(e,'port')}</span>`:''}<ui-icon class="go" name="go" w="14" h="14"></ui-icon><span class="ic"><ui-icon name="${A(e,'icon')}" w="58" h="58"></ui-icon></span><b>${A(e,'label')}</b><p><slot></slot></p></a>`);

define('stat-item',e=>`<style>:host{display:block;text-align:center}
b{display:block;font-size:58px;line-height:70px;font-weight:600;color:#6a7de2}
span{display:block;font-size:25px;line-height:32px;letter-spacing:1px;color:#7f8c8d;white-space:nowrap}</style><b>0</b><span><slot></slot></span>`);

define('connection-form',`<style>
:host{display:block;padding:45px}
h2{margin:0 0 36px;font-size:40px;line-height:51px;font-weight:400;color:#2c3e50}
.grid{display:grid;grid-template-columns:1fr 1fr;gap:36px;margin-bottom:36px}
label{font-size:25px;line-height:32px;font-weight:500;color:#555}
.row{display:flex;align-items:center;gap:14px;height:83px}
.col{display:flex;flex-direction:column;gap:12px}
input,select{font:29px "Liberation Sans",sans-serif;box-sizing:border-box;height:83px;border:3px solid #e1e8ed;border-radius:14px;background:#fff;padding:0 21px;margin:0}
input{width:349px}input::placeholder{color:#757575}
select{appearance:none;width:100%;padding:0 60px 0 28px;color:#000}
.sel{position:relative}.sel ui-icon{position:absolute;right:10px;top:37px;pointer-events:none}
.btns{display:flex;gap:27px}
button{font:29px "Liberation Sans",sans-serif;letter-spacing:1px;height:82px;border:0;border-radius:14px;padding:0 42px;color:#fff;text-transform:uppercase}
.a{background:linear-gradient(135deg,#6a7de2,#714f9f)}
.b{background:linear-gradient(135deg,#ee7470,#da6132)}
.c{background:#f8f9fa;color:#6c757d;border:3px solid #e9ecef}
</style><h2>Connection Controls</h2>
<div class="grid"><div class="row"><label for="cid">Single Connection ID (optional)</label><input id="cid" placeholder="Specific ID for single connection"></div>
<div class="col"><label for="mode">Connection Mode</label><div class="sel"><select id="mode"><option>Single Connection</option></select><ui-icon name="chev" w="17" h="10"></ui-icon></div></div></div>
<div class="btns"><button class="a">Create Connection</button><button class="b">Disconnect All</button><button class="c">Clear All</button></div>`);

define('empty-state',`<style>
:host{display:flex;flex-direction:column;align-items:center;padding:123px 36px;color:#7f8c8d;text-align:center}
h3{margin:59px 0 34px;font-size:33px;line-height:40px;font-weight:700}
p{margin:0;font:26px/34px Roboto,sans-serif;white-space:nowrap}
</style><ui-icon name="plug" w="114" h="114"></ui-icon><h3>No connections yet</h3><p>Create your first WebSocket connection using the controls above</p>`);

define('test-page',`<style>
:host{flex:1;min-height:0;display:block;overflow:hidden;background:linear-gradient(135deg,#6a7de2 0%,#714f9f 100%);padding:36px}
main{max-width:2520px;margin:0 auto;display:flex;flex-direction:column;gap:54px}
.hero{padding:54px;text-align:center}
h1{margin:0 0 31px;font:300 69px/90px Roboto,sans-serif;color:#2c3e50}
.hero p{margin:0;font-size:30px;line-height:38px;color:#7f8c8d}
.head{padding:36px 45px 34px;background:#f8f9fa;border-bottom:2px solid #e9ecef}
h2{margin:0 0 7px;font-size:33px;line-height:42px;font-weight:500;color:#2c3e50}
.head p{margin:0;font-size:25px;line-height:32px;color:#6c757d}
.tools{display:flex}
.stats{display:flex;justify-content:space-between;padding:36px}
.list{display:grid;grid-template-columns:repeat(3,minmax(0,1fr));gap:36px}
</style><main>
<app-card><div class="hero"><h1>SigIQ assignment - WebSocket Test Interface</h1><p>Test WebSocket connections with real-time monitoring and advanced controls</p></div></app-card>
<app-card><div class="head"><h2>Monitoring &amp; Management Dashboards</h2><p>Access all monitoring tools and dashboards for comprehensive system observability</p></div>
<div class="tools">
<dash-link icon="bars" label="Grafana" port=":3000">Visualize metrics, logs, and create custom dashboards</dash-link>
<dash-link icon="lens" label="Prometheus" port=":9090">Query metrics, explore targets, and view alerts</dash-link>
<dash-link icon="shuffle" label="Traefik" port=":8080">Load balancer dashboard, routing, and service discovery</dash-link>
<dash-link icon="heart" label="Health Check">Application health status and readiness</dash-link>
<dash-link icon="chart" label="Metrics">Raw Prometheus metrics endpoint</dash-link></div></app-card>
<app-card><connection-form></connection-form></app-card>
<app-card><div class="stats"><stat-item>TOTAL CONNECTIONS</stat-item><stat-item>ACTIVE CONNECTIONS</stat-item><stat-item>MESSAGES SENT</stat-item><stat-item>MESSAGES RECEIVED</stat-item></div></app-card>
<div class="list"><empty-state></empty-state></div></main>`);

/* ---------- dock ---------- */
define('dock-app',e=>`<style>
:host{display:block;position:relative;width:70px;height:70px}
:host([running])::after{content:"";position:absolute;left:31px;top:80px;width:8px;height:8px;border-radius:50%;background:#a39c94}
.badge{position:absolute;top:-8px;right:-9px;min-width:34px;height:34px;box-sizing:border-box;border-radius:17px;padding:0 5px;background:#dc4c3e;color:#fff;font-size:17px;line-height:34px;text-align:center;box-shadow:0 1px 4px #0006}
.tile{width:70px;height:70px;border-radius:16px;display:flex;flex-direction:column;align-items:center;overflow:hidden}
.cal{background:#f8f7f6;color:#222}
.cal small{width:100%;background:#e5574b;color:#fff;font-size:14px;line-height:22px;font-weight:600;text-align:center}
.cal b{font-weight:300;font-size:43px;line-height:45px}
.tv{background:linear-gradient(#263230,#0d1113);color:#fff;flex-direction:row;justify-content:center;gap:1px;font-size:28px;font-weight:500;line-height:70px}
</style>${A(e,'icon')==='calendar'?'<div class="tile cal"><small>JUL</small><b>7</b></div>':A(e,'icon')==='tv'?'<div class="tile tv"><ui-icon name="apple" w="21" h="26"></ui-icon><span>tv</span></div>':`<ui-icon name="${A(e,'icon')}" w="${A(e,'w','70')}" h="${A(e,'h','70')}"></ui-icon>`}${A(e,'badge')?`<span class="badge">${A(e,'badge')}</span>`:''}`);

define('mac-dock',`<style>
:host{display:flex;box-sizing:border-box;height:108px;gap:20px;padding:14px 12px 0 14px;border:2px solid #ffffff30;border-radius:36px;
background:linear-gradient(90deg,#2a2018,#2c1f15 16%,#272a21 24%,#20251f 32%,#2a2a22 38%,#23271f 46%,#22301e 52%,#20261f 60%,#272519 66%,#321e15 73%,#2a2018 80%,#303420 89%,#222421);
box-shadow:0 0 60px #0005}
.sep{width:2px;height:80px;background:#ffffff40;margin:-3px 10px 0}
.file{width:70px;height:84px;margin-top:-6px;display:flex;justify-content:center}
</style>
<dock-app icon="finder" running></dock-app><dock-app icon="launch"></dock-app><dock-app icon="safari"></dock-app><dock-app icon="firefox"></dock-app><dock-app icon="facetime"></dock-app><dock-app icon="messages" badge="3,939" running></dock-app><dock-app icon="mail" badge="252" running></dock-app><dock-app icon="maps"></dock-app><dock-app icon="music" running></dock-app><dock-app icon="photos"></dock-app><dock-app icon="notes"></dock-app><dock-app icon="contacts" w="72"></dock-app><dock-app icon="reminders"></dock-app><dock-app icon="tv"></dock-app><dock-app icon="calendar" badge="6" running></dock-app><dock-app icon="podcasts"></dock-app><dock-app icon="numbers"></dock-app><dock-app icon="pages"></dock-app><dock-app icon="appstore"></dock-app><dock-app icon="settings" badge="1"></dock-app><dock-app icon="feedback"></dock-app><dock-app icon="iphone"></dock-app><dock-app icon="preview" w="74" h="74" running></dock-app>
<span class="sep"></span>
<dock-app icon="chrome" running></dock-app><dock-app icon="terminal" running></dock-app><dock-app icon="whatsapp" running></dock-app><dock-app icon="activity" running></dock-app><dock-app icon="keys" running></dock-app><dock-app icon="teams" badge="15" running></dock-app><dock-app icon="cursor" running></dock-app><dock-app icon="openai" running></dock-app>
<span class="sep"></span>
<div class="file"><ui-icon name="docs" w="56" h="82"></ui-icon></div><div class="file"><ui-icon name="trash" w="62" h="80"></ui-icon></div>`);

define('mac-desktop',`<style>
:host{display:grid;grid-template-rows:auto 1fr auto;height:100vh;position:relative;background:#0a0a08;overflow:hidden}
.wall{position:absolute;left:0;right:0;bottom:0;width:100%;height:140px}
browser-window{margin-top:2px}
footer{position:relative;display:flex;justify-content:center;padding:2px 0 10px}
</style>
<svg class="wall" aria-hidden="true"><defs><filter id="f" x="0" y="0" width="100%" height="100%" color-interpolation-filters="sRGB"><feTurbulence type="fractalNoise" baseFrequency=".035 .025" numOctaves="5" seed="8"/><feColorMatrix values=".5 .1 0 0 -.23  .52 0 0 0 -.19  .4 0 0 0 -.16  0 0 0 0 1"/></filter>
<linearGradient id="s"><stop stop-color="#000" stop-opacity=".6"/><stop offset=".04" stop-color="#4a2414" stop-opacity=".3"/><stop offset=".2" stop-color="#301008" stop-opacity=".4"/><stop offset=".3" stop-color="#203010" stop-opacity=".4"/><stop offset=".6" stop-color="#203010" stop-opacity=".3"/><stop offset=".72" stop-color="#401808" stop-opacity=".4"/><stop offset=".9" stop-color="#101808" stop-opacity=".4"/><stop offset="1" stop-color="#141c10" stop-opacity=".3"/></linearGradient></defs><rect width="100%" height="100%" filter="url(#f)"/><rect width="100%" height="100%" fill="url(#s)"/></svg>
<mac-menubar></mac-menubar>
<browser-window><test-page></test-page></browser-window>
<footer><mac-dock></mac-dock></footer>`);
</script>
</body>
</html>
